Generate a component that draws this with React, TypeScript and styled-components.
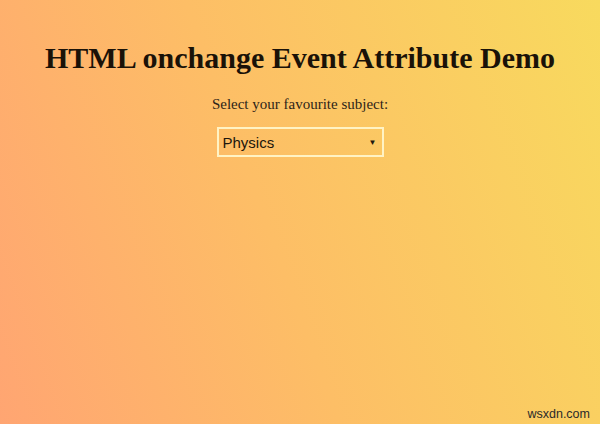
import styled, { createGlobalStyle } from 'styled-components';

const GlobalStyle = createGlobalStyle`
	html, body {
		margin: 0;
		padding: 0;
		height: 100%;
	}
	#root {
		height: 100%;
	}
`;

function App() {
	return (
		<>
			<GlobalStyle />
			<Page>
				<Title>HTML onchange Event Attribute Demo</Title>
				<Label>Select your favourite subject:</Label>
				<SelectBox>
					<SelectText>Physics</SelectText>
					<Caret>▼</Caret>
				</SelectBox>
				<Watermark>wsxdn.com</Watermark>
			</Page>
		</>
	);
}

const Page = styled.div`
	position: relative;
	width: 600px;
	height: 424px;
	overflow: hidden;
	display: flex;
	flex-direction: column;
	align-items: center;
	background: linear-gradient(70deg, #ffa572 0%, #fdbe66 45%, #f8da5e 100%);
	font-family: 'Liberation Serif', 'Times New Roman', serif;
	color: #1a1208;
`;

const Title = styled.h1`
	margin: 40px 0 0;
	font-size: 30px;
	font-weight: 700;
	line-height: 35px;
`;

const Label = styled.p`
	margin: 21px 0 0;
	font-size: 15px;
	line-height: 17px;
	color: #2e2418;
`;

const SelectBox = styled.div`
	margin-top: 14px;
	width: 167px;
	height: 30px;
	box-sizing: border-box;
	border: 2px solid #fff3c4;
	display: flex;
	align-items: center;
	justify-content: space-between;
	padding: 0 5px 0 4px;
	font-family: 'Liberation Sans', Arial, sans-serif;
`;

const SelectText = styled.span`
	font-size: 15px;
	color: #20160c;
`;

const Caret = styled.span`
	font-size: 8px;
	color: #20160c;
`;

const Watermark = styled.span`
	position: absolute;
	right: 10px;
	bottom: 3px;
	font-family: 'Liberation Sans', Arial, sans-serif;
	font-size: 12.5px;
	color: #2a2a2a;
`;

export default App;
